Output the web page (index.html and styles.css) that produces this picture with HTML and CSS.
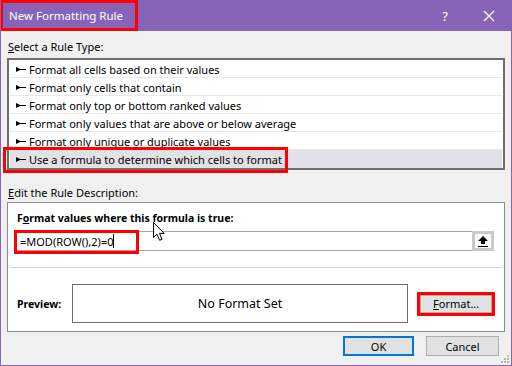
FILE: index.html
```html
<!DOCTYPE html>
<html lang="en">
<head>
    <meta charset="UTF-8">
    <meta name="viewport" content="width=device-width, initial-scale=1.0">
    <title>New Formatting Rule</title>
    <link rel="stylesheet" href="styles.css">
</head>
<body>
    <div class="dialog">
        <header class="titlebar">
            <span class="title mark">New Formatting Rule</span>
            <span class="help">?</span>
            <svg class="close" width="12" height="12" viewBox="0 0 12 12">
                <path d="M1 1L11 11M11 1L1 11" stroke="#fff" stroke-width="1.2"/>
            </svg>
        </header>

        <main class="body">
            <div class="label"><u>S</u>elect a Rule Type:</div>
            <ul class="rule-list">
                <li><svg class="bullet" width="10" height="5" viewBox="0 0 10 5"><path d="M0 0L4 2H10V3H4L0 5Z"/></svg>Format all cells based on their values</li>
                <li><svg class="bullet" width="10" height="5" viewBox="0 0 10 5"><path d="M0 0L4 2H10V3H4L0 5Z"/></svg>Format only cells that contain</li>
                <li><svg class="bullet" width="10" height="5" viewBox="0 0 10 5"><path d="M0 0L4 2H10V3H4L0 5Z"/></svg>Format only top or bottom ranked values</li>
                <li><svg class="bullet" width="10" height="5" viewBox="0 0 10 5"><path d="M0 0L4 2H10V3H4L0 5Z"/></svg>Format only values that are above or below average</li>
                <li><svg class="bullet" width="10" height="5" viewBox="0 0 10 5"><path d="M0 0L4 2H10V3H4L0 5Z"/></svg>Format only unique or duplicate values</li>
                <li class="selected"><svg class="bullet" width="10" height="5" viewBox="0 0 10 5"><path d="M0 0L4 2H10V3H4L0 5Z"/></svg>Use a formula to determine which cells to format<span class="row-mark"></span></li>
            </ul>

            <div class="label label-desc"><u>E</u>dit the Rule Description:</div>
            <div class="desc">
                <div class="desc-title">F<u>o</u>rmat values where this formula is true:</div>
                <div class="formula">
                    <span class="formula-text">=MOD(ROW(),2)=0<span class="caret"></span></span>
                    <span class="formula-mark"></span>
                    <button class="collapse">
                        <svg width="12" height="14" viewBox="0 0 12 14">
                            <path d="M6 2L1 7H4V10H8V7H11Z" fill="#000"/>
                            <rect x="1" y="12" width="10" height="1" fill="#000"/>
                        </svg>
                    </button>
                </div>
                <div class="sep"></div>
                <div class="preview-row">
                    <b class="preview-label">Preview:</b>
                    <div class="preview-box">No Format Set</div>
                    <span class="format-wrap mark"><button class="btn"><u>F</u>ormat...</button></span>
                </div>
            </div>

            <div class="actions">
                <button class="btn btn-ok">OK</button>
                <button class="btn btn-cancel">Cancel</button>
            </div>
            <svg class="grip" width="10" height="10" viewBox="0 0 10 10">
                <rect x="7" y="1" width="2" height="2" fill="#b8b8b8"/>
                <rect x="4" y="4" width="2" height="2" fill="#b8b8b8"/>
                <rect x="7" y="4" width="2" height="2" fill="#b8b8b8"/>
                <rect x="1" y="7" width="2" height="2" fill="#b8b8b8"/>
                <rect x="4" y="7" width="2" height="2" fill="#b8b8b8"/>
                <rect x="7" y="7" width="2" height="2" fill="#b8b8b8"/>
            </svg>
        </main>

        <svg class="cursor" width="14" height="20" viewBox="0 0 14 20">
            <path d="M0.5 0.5V15.5L4 12.2L6.6 18.3L9 17.3L6.5 11.4H11.2Z" fill="#fff" stroke="#000" stroke-width="1"/>
        </svg>
    </div>
</body>
</html>
```

FILE: styles.css
```css
body {
    margin: 0;
    font-family: 'Noto Sans', sans-serif;
    font-size: 11px;
    color: #000;
    background: #f0f0f0;
}
.dialog {
    position: relative;
    width: 512px;
    height: 366px;
    box-sizing: border-box;
    border: 1px solid #8764b8;
    border-top: 0;
    background: #f0f0f0;
    overflow: hidden;
}
.mark {
    border: 3px solid #ff0000;
    box-sizing: border-box;
}
.titlebar {
    height: 31px;
    margin: 0 -1px;
    background: #8764b8;
    color: #fff;
    display: flex;
    align-items: flex-start;
}
.title {
    height: 31px;
    width: 138px;
    padding-left: 6px;
    line-height: 26px;
    font-size: 11.5px;
}
.help {
    margin-left: auto;
    margin-top: 7px;
    font-size: 13px;
}
.close {
    margin: 10px 17px 0 35px;
}
.body {
    position: relative;
    padding: 8px 6px 0 6px;
}
.label {
    line-height: 16px;
    padding-left: 1px;
}
.rule-list {
    list-style: none;
    margin: 3px 0 0 0;
    padding: 0 1px;
    height: 108px;
    border: 2px solid #6e6e6e;
    background: #fff;
}
.rule-list li {
    position: relative;
    height: 18px;
    box-sizing: border-box;
    padding-top: 1px;
    border-bottom: 1px solid #e8e8e8;
    display: flex;
    align-items: center;
    padding-left: 6px;
}
.rule-list li.selected {
    background: #e1e1e6;
    border-bottom: 0;
}
.bullet {
    margin-right: 3px;
    fill: #000;
}
.row-mark {
    position: absolute;
    left: -7px;
    top: -3px;
    width: 285px;
    height: 26px;
    border: 3px solid #ff0000;
    box-sizing: border-box;
}
.label-desc {
    margin-top: 15px;
}
.desc {
    margin-top: 1px;
    height: 130px;
    box-sizing: border-box;
    border: 1px solid #898c95;
    background: #fff;
    padding: 7px 9px 0 6px;
}
.desc-title {
    font-weight: bold;
    font-size: 10.5px;
    line-height: 16px;
    padding-left: 3px;
}
.formula {
    position: relative;
    margin-top: 5px;
    height: 20px;
    width: 480px;
    box-sizing: border-box;
    border: 1px solid #a5a5a5;
    display: flex;
    align-items: center;
}
.formula-text {
    padding-left: 5px;
    font-size: 11px;
    display: flex;
    align-items: center;
}
.caret {
    width: 1px;
    height: 14px;
    background: #000;
}
.formula-mark {
    position: absolute;
    left: -1px;
    top: -2px;
    width: 125px;
    height: 24px;
    border: 3px solid #ff0000;
    box-sizing: border-box;
}
.collapse {
    margin-left: auto;
    width: 22px;
    height: 20px;
    margin-right: -1px;
    border: 3px solid #cacaca;
    background: #fafafa;
    padding: 0;
    display: flex;
    align-items: center;
    justify-content: center;
}
.sep {
    margin: 16px -7px 0 -4px;
    height: 1px;
    background: #d2d2d2;
}
.preview-row {
    margin-top: 16px;
    display: flex;
    align-items: center;
}
.preview-label {
    font-size: 10.5px;
    padding-left: 3px;
    width: 55px;
}
.preview-box {
    width: 338px;
    height: 39px;
    box-sizing: border-box;
    border: 1px solid #6e6e6e;
    display: flex;
    align-items: center;
    justify-content: center;
    font-size: 12.5px;
}
.format-wrap {
    margin-left: 9px;
    width: 78px;
    height: 24px;
    display: flex;
}
.btn {
    font-family: 'Noto Sans', sans-serif;
    font-size: 11px;
    color: #000;
    background: #e1e1e1;
    border: 1px solid #adadad;
    padding: 0;
    box-sizing: border-box;
}
.format-wrap .btn {
    width: 100%;
    height: 100%;
    line-height: 14px;
}
.actions {
    display: flex;
    justify-content: flex-end;
    gap: 12px;
    margin-top: 4px;
    padding-right: 6px;
}
.btn-ok {
    width: 71px;
    height: 20px;
    border: 2px solid #0078d7;
}
.btn-cancel {
    width: 73px;
    height: 20px;
}
.grip {
    position: absolute;
    right: 1px;
    top: 323px;
}
.cursor {
    position: absolute;
    left: 152px;
    top: 222px;
}
```
